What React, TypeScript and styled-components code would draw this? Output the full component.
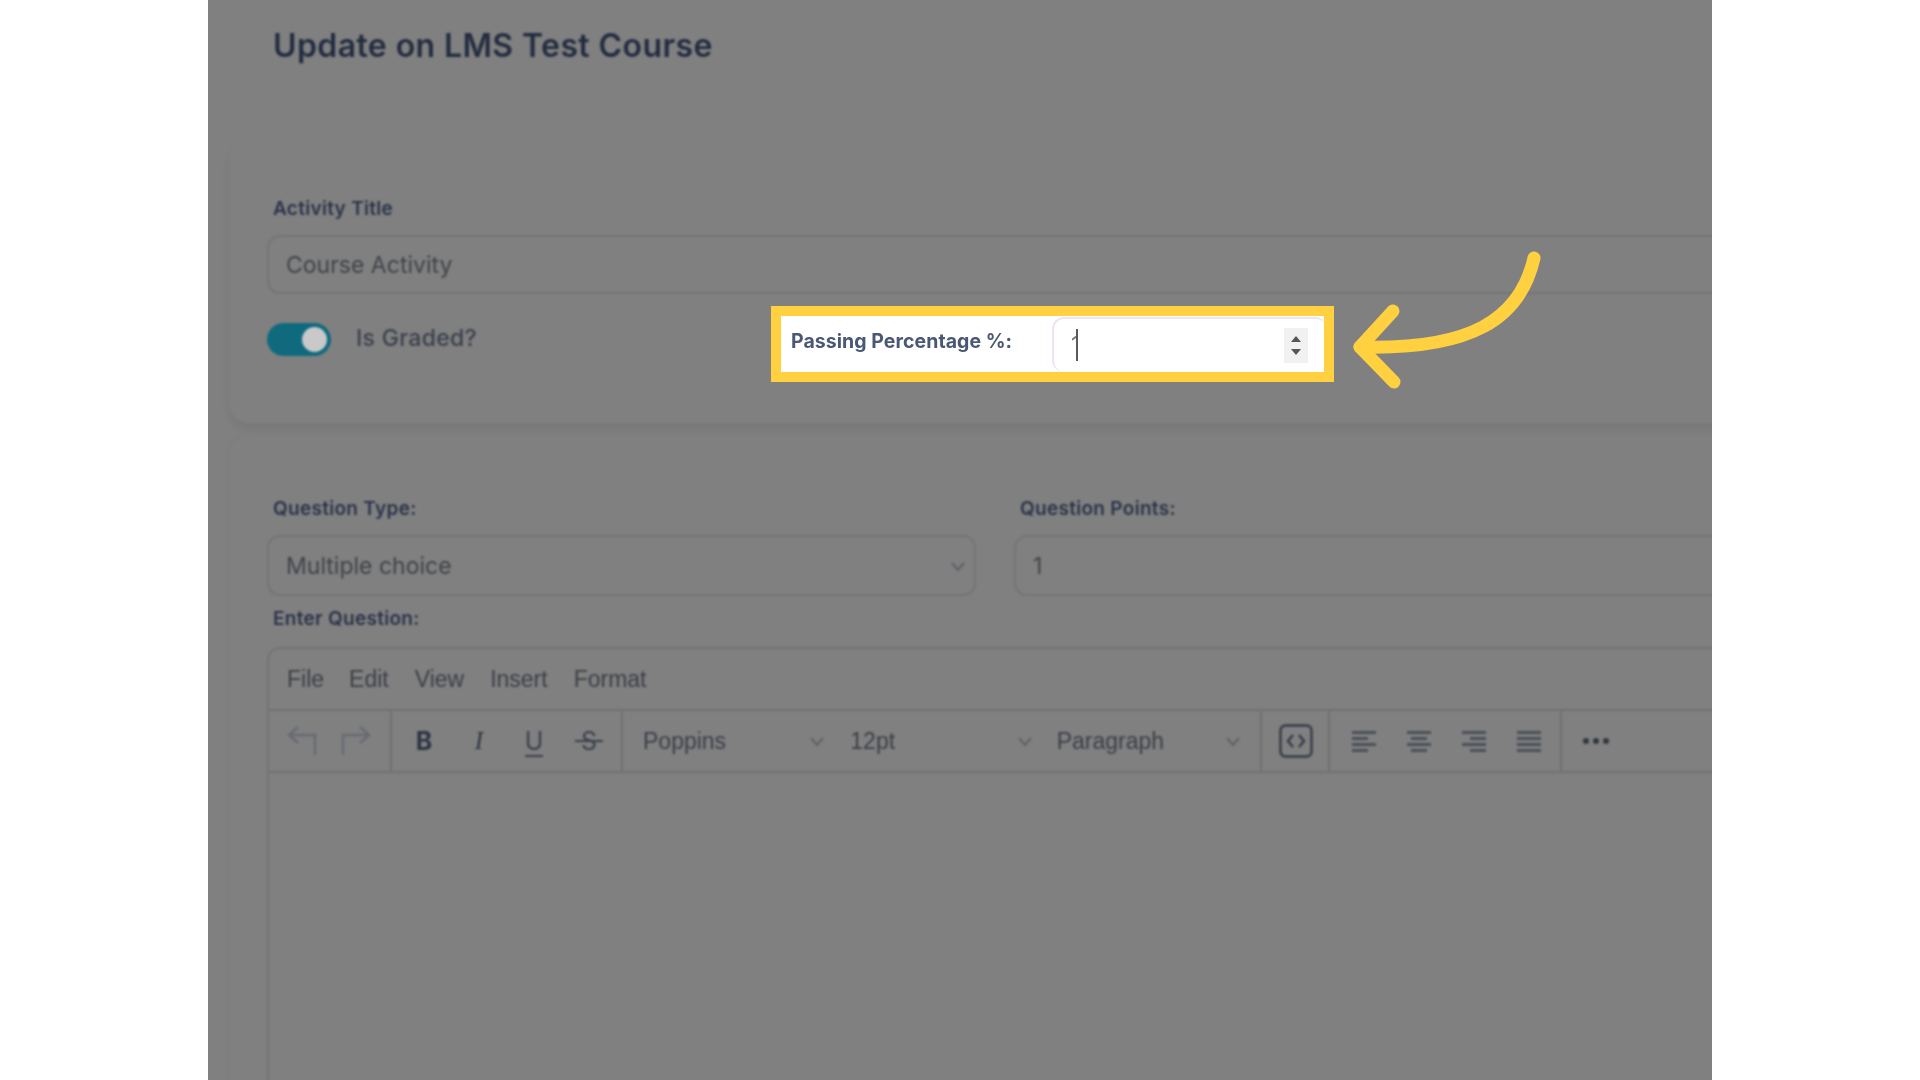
import styled, { createGlobalStyle } from "styled-components";

const GlobalStyle = createGlobalStyle`
  html, body {
    margin: 0;
    padding: 0;
    background: #ffffff;
  }
`;

const Page = styled.div`
  width: 1920px;
  height: 1080px;
  display: flex;
  justify-content: center;
  overflow: hidden;
  background: #ffffff;
`;

const Frame = styled.div`
  position: relative;
  width: 1504px;
  height: 1080px;
  overflow: hidden;
  background: #808080;
`;

const Blurred = styled.div`
  width: 1700px;
  filter: blur(1.2px);
  font-family: "Inter", "Open Sans", sans-serif;
`;

const Header = styled.div`
  height: 140px;
  padding-left: 65px;
  box-sizing: border-box;
`;

const Title = styled.h1`
  margin: 0;
  padding-top: 26px;
  font-size: 32px;
  line-height: 40px;
  font-weight: 600;
  color: #232c40;
  letter-spacing: 0.4px;
`;

const Card = styled.section<{ $height: number; $top: number; $raised?: boolean }>`
  height: ${(p) => p.$height}px;
  margin-left: 21px;
  margin-bottom: ${(p) => (p.$raised ? 12 : 0)}px;
  padding: ${(p) => p.$top}px 0 0 38px;
  box-sizing: border-box;
  border-radius: 20px 0 0 20px;
  box-shadow: ${(p) => (p.$raised ? "0 6px 10px rgba(0, 0, 0, 0.07)" : "-1px -1px 2px rgba(0, 0, 0, 0.03)")};
`;

const Label = styled.div<{ $inset?: number }>`
  height: 20px;
  margin-left: ${(p) => p.$inset ?? 6}px;
  font-size: 19px;
  line-height: 20px;
  font-weight: 600;
  letter-spacing: 0.3px;
  color: #2a3349;
`;

const Field = styled.div<{ $height: number }>`
  display: flex;
  align-items: center;
  justify-content: space-between;
  height: ${(p) => p.$height}px;
  padding: 0 7px 0 17px;
  box-sizing: border-box;
  border: 2px solid #747474;
  border-radius: 13px;
  font-size: 23px;
  color: #3f4349;
`;

const ActivityField = styled(Field)`
  margin-top: 16px;
  width: 1500px;
`;

const ToggleRow = styled.div`
  display: flex;
  align-items: center;
  gap: 25px;
  margin-top: 29px;
`;

const Toggle = styled.div`
  display: flex;
  align-items: center;
  justify-content: flex-end;
  width: 64px;
  height: 33px;
  padding-right: 4px;
  box-sizing: border-box;
  border-radius: 17px;
  background: #0f6a7e;
`;

const Knob = styled.div`
  width: 25px;
  height: 25px;
  border-radius: 50%;
  background: #c9c9c9;
`;

const ToggleText = styled.div`
  margin-bottom: 4px;
  font-size: 23px;
  font-weight: 500;
  letter-spacing: 0.3px;
  color: #3a3f4d;
`;

const QuestionGrid = styled.div`
  display: grid;
  grid-template-columns: 709px 800px;
  column-gap: 38px;
`;

const GridField = styled(Field)`
  margin-top: 16px;
`;

const EnterLabel = styled(Label)`
  margin-top: 13px;
`;

const Editor = styled.div`
  margin-top: 18px;
  width: 1500px;
  height: 600px;
  border: 2px solid #737373;
  border-radius: 13px 0 0 0;
  box-sizing: border-box;
  font-family: "Liberation Sans", "Inter", sans-serif;
  color: #3f444d;
`;

const MenuBar = styled.div`
  display: flex;
  align-items: center;
  height: 60px;
  font-size: 23px;
  color: #3a3e46;
`;

const MenuItem = styled.span<{ $left: number }>`
  margin-left: ${(p) => p.$left}px;
`;

const Toolbar = styled.div`
  display: flex;
  height: 64px;
  border-top: 2px solid #727272;
  border-bottom: 2px solid #727272;
  box-sizing: border-box;
`;

const ToolGroup = styled.div<{ $width: number; $gap?: number; $pad?: number }>`
  display: flex;
  align-items: center;
  gap: ${(p) => p.$gap ?? 0}px;
  width: ${(p) => p.$width}px;
  padding-left: ${(p) => p.$pad ?? 0}px;
  box-sizing: border-box;
  border-right: 2px solid #727272;

  &:last-child {
    border-right: 0;
  }
`;

const FormatGlyph = styled.span<{ $bold?: boolean; $italic?: boolean }>`
  position: relative;
  width: 28px;
  text-align: center;
  font-family: ${(p) => (p.$italic ? '"Liberation Serif", serif' : '"Inter", sans-serif')};
  font-size: 25px;
  line-height: 30px;
  font-weight: ${(p) => (p.$bold ? 700 : 400)};
  font-style: ${(p) => (p.$italic ? "italic" : "normal")};
  color: #2c3442;
`;

const UnderGlyph = styled(FormatGlyph)`
  color: #3a404c;

  &::after {
    content: "";
    position: absolute;
    left: 5px;
    right: 5px;
    bottom: -1px;
    height: 2px;
    background: #3a404c;
  }
`;

const StrikeGlyph = styled(FormatGlyph)`
  color: #3a404c;

  &::after {
    content: "";
    position: absolute;
    left: 0;
    right: 0;
    top: 14px;
    height: 2px;
    background: #3a404c;
  }
`;

const SelectSlot = styled.div<{ $width: number; $right: number }>`
  display: flex;
  align-items: center;
  justify-content: space-between;
  width: ${(p) => p.$width}px;
  padding: 0 ${(p) => p.$right}px 0 20px;
  box-sizing: border-box;
  font-size: 23px;
  color: #3a3e46;
`;

const Highlight = styled.div`
  position: absolute;
  left: 563px;
  top: 306px;
  display: flex;
  align-items: stretch;
  width: 563px;
  height: 76px;
  border: 10px solid #ffd040;
  box-sizing: border-box;
  background: #ffffff;
  font-family: "Inter", "Open Sans", sans-serif;
`;

const PassLabel = styled.div`
  width: 271px;
  padding: 13px 0 0 10px;
  box-sizing: border-box;
  font-size: 19.5px;
  line-height: 24px;
  font-weight: 700;
  letter-spacing: 0.05px;
  color: #4a5775;
  filter: blur(0.6px);
`;

const PassInput = styled.div`
  position: relative;
  flex: 1;
  margin-top: 1px;
  border: 2px solid #efe3f2;
  border-bottom: 0;
  border-right: 0;
  border-radius: 12px 8px 0 12px;
  box-sizing: border-box;
`;

const PassValue = styled.span`
  position: absolute;
  left: 17px;
  top: 9px;
  font-size: 22px;
  line-height: 32px;
  color: #777777;
  filter: blur(0.5px);
`;

const Caret = styled.span`
  position: absolute;
  left: 22px;
  top: 10px;
  width: 2px;
  height: 32px;
  background: #5a5a5a;
  filter: blur(0.4px);
`;

const Spinner = styled.div`
  position: absolute;
  right: 16px;
  top: 9px;
  display: flex;
  flex-direction: column;
  align-items: center;
  justify-content: space-between;
  width: 24px;
  height: 35px;
  padding: 8px 0;
  box-sizing: border-box;
  background: #f1f1f1;
`;

const Triangle = styled.span<{ $down?: boolean }>`
  width: 0;
  height: 0;
  border-left: 5.5px solid transparent;
  border-right: 5.5px solid transparent;
  ${(p) => (p.$down ? "border-top: 6px solid #555555;" : "border-bottom: 6px solid #555555;")}
`;

const ArrowLayer = styled.svg`
  position: absolute;
  left: 1130px;
  top: 240px;
  width: 220px;
  height: 160px;
  fill: none;
  stroke: #ffd040;
  stroke-width: 13px;
  stroke-linecap: round;
  stroke-linejoin: round;
`;

const Chevron = ({ size = 18 }: { size?: number }) => (
  <svg width={size} height={size} viewBox="0 0 18 18" fill="none" stroke="#5c6068" strokeWidth="2">
    <path d="M3 6l6 7 6-7" />
  </svg>
);

const HistoryIcon = ({ flip }: { flip?: boolean }) => (
  <svg
    width="30"
    height="32"
    viewBox="0 0 30 32"
    fill="none"
    stroke="#666a70"
    strokeWidth="2.4"
    style={flip ? { transform: "scaleX(-1)" } : undefined}
  >
    <path d="M11 2L2 10l9 8M2 10h26v20" />
  </svg>
);

const CodeIcon = () => (
  <svg width="34" height="34" viewBox="0 0 34 34" fill="none" stroke="#333a46" strokeWidth="2.4">
    <rect x="1.5" y="1.5" width="31" height="31" rx="5" />
    <path d="M14 11l-5 6 5 6M20 11l5 6-5 6" />
  </svg>
);

const alignLines: Record<string, [number, number][]> = {
  left: [[0, 24], [0, 16], [0, 24], [0, 16]],
  center: [[0, 24], [4, 16], [0, 24], [4, 16]],
  right: [[0, 24], [8, 16], [0, 24], [8, 16]],
  justify: [[0, 24], [0, 24], [0, 24], [0, 24]],
};

const AlignIcon = ({ kind }: { kind: string }) => (
  <svg width="26" height="22" viewBox="0 0 26 22" fill="#4b4f57">
    {alignLines[kind].map(([x, w], i) => (
      <rect key={i} x={x + 1} y={1 + i * 6} width={w} height="3" />
    ))}
  </svg>
);

const DotsIcon = () => (
  <svg width="28" height="8" viewBox="0 0 28 8" fill="#30363f">
    <circle cx="4" cy="4" r="3" />
    <circle cx="14" cy="4" r="3" />
    <circle cx="24" cy="4" r="3" />
  </svg>
);

const menuItems: [string, number][] = [
  ["File", 18],
  ["Edit", 25],
  ["View", 26],
  ["Insert", 26],
  ["Format", 26],
];

export default function App() {
  return (
    <Page>
      <GlobalStyle />
      <Frame>
        <Blurred>
          <Header>
            <Title>Update on LMS Test Course</Title>
          </Header>
          <Card $height={283} $top={59} $raised>
            <Label>Activity Title</Label>
            <ActivityField $height={59}>Course Activity</ActivityField>
            <ToggleRow>
              <Toggle>
                <Knob />
              </Toggle>
              <ToggleText>Is Graded?</ToggleText>
            </ToggleRow>
          </Card>
          <Card $height={700} $top={64}>
            <QuestionGrid>
              <div>
                <Label>Question Type:</Label>
                <GridField $height={61}>
                  Multiple choice
                  <Chevron />
                </GridField>
              </div>
              <div>
                <Label>Question Points:</Label>
                <GridField $height={61}>1</GridField>
              </div>
            </QuestionGrid>
            <EnterLabel>Enter Question:</EnterLabel>
            <Editor>
              <MenuBar>
                {menuItems.map(([name, left]) => (
                  <MenuItem key={name} $left={left}>
                    {name}
                  </MenuItem>
                ))}
              </MenuBar>
              <Toolbar>
                <ToolGroup $width={123} $pad={18} $gap={24}>
                  <HistoryIcon />
                  <HistoryIcon flip />
                </ToolGroup>
                <ToolGroup $width={231} $pad={18} $gap={27}>
                  <FormatGlyph $bold>B</FormatGlyph>
                  <FormatGlyph $italic>I</FormatGlyph>
                  <UnderGlyph>U</UnderGlyph>
                  <StrikeGlyph>S</StrikeGlyph>
                </ToolGroup>
                <ToolGroup $width={639}>
                  <SelectSlot $width={208} $right={4}>
                    Poppins
                    <Chevron />
                  </SelectSlot>
                  <SelectSlot $width={207} $right={3}>
                    12pt
                    <Chevron />
                  </SelectSlot>
                  <SelectSlot $width={224} $right={18}>
                    Paragraph
                    <Chevron />
                  </SelectSlot>
                </ToolGroup>
                <ToolGroup $width={68} $pad={17}>
                  <CodeIcon />
                </ToolGroup>
                <ToolGroup $width={232} $pad={21} $gap={29}>
                  <AlignIcon kind="left" />
                  <AlignIcon kind="center" />
                  <AlignIcon kind="right" />
                  <AlignIcon kind="justify" />
                </ToolGroup>
                <ToolGroup $width={100} $pad={20}>
                  <DotsIcon />
                </ToolGroup>
              </Toolbar>
            </Editor>
          </Card>
        </Blurred>
        <Highlight>
          <PassLabel>Passing Percentage %:</PassLabel>
          <PassInput>
            <PassValue>1</PassValue>
            <Caret />
            <Spinner>
              <Triangle />
              <Triangle $down />
            </Spinner>
          </PassInput>
        </Highlight>
        <ArrowLayer viewBox="1338 240 220 160">
          <path d="M1534 258C1520 320 1470 350 1360 347" />
          <path d="M1393 311L1360 347L1394 382" />
        </ArrowLayer>
      </Frame>
    </Page>
  );
}
